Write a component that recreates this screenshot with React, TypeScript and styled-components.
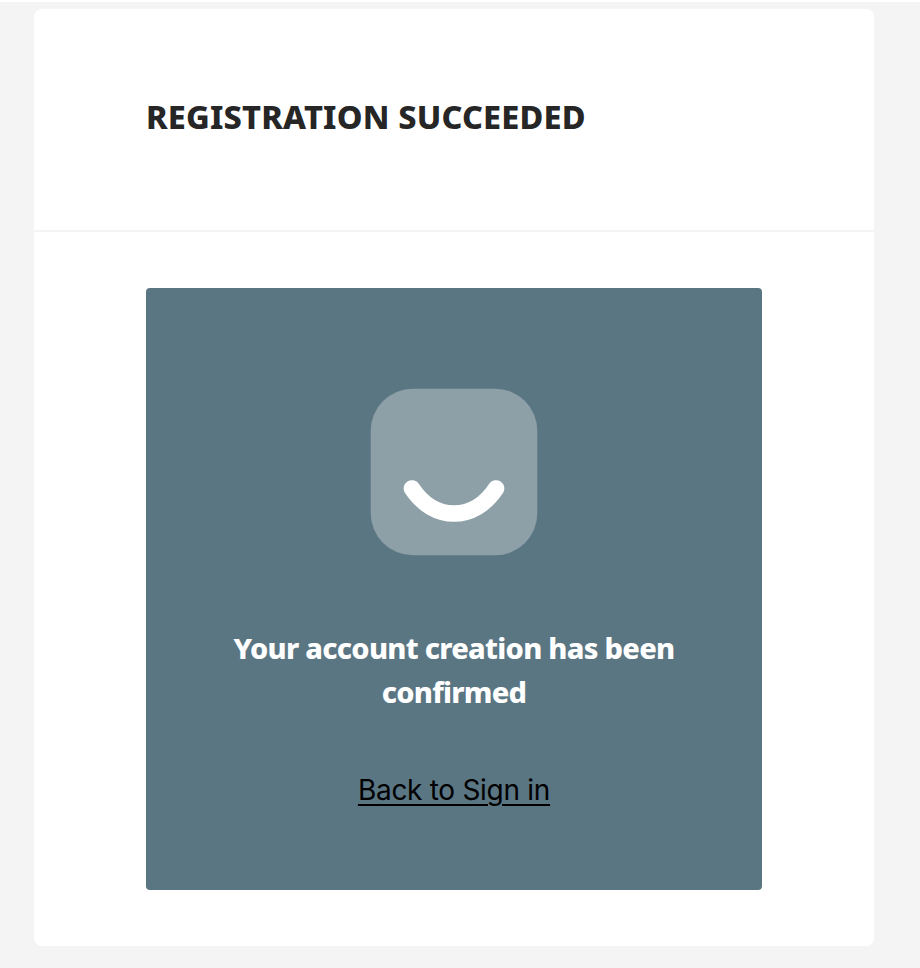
import React from "react";
import styled, { createGlobalStyle } from "styled-components";

const GlobalStyle = createGlobalStyle`
  * { box-sizing: border-box; }
  body { margin: 0; background: #f4f4f4; }
`;

const Page = styled.main`
  height: 968px;
  padding: 7px 46px 0 34px;
  border-top: 2px solid #fff;
  overflow: hidden;
`;

const Card = styled.section`
  width: 840px;
  height: 937px;
  background: #fff;
  border-radius: 8px;
`;

const CardHeader = styled.header`
  height: 223px;
  padding: 84px 112px 0;
  border-bottom: 2px solid #f4f4f4;
`;

const Title = styled.h1`
  margin: 0;
  font-family: "Noto Sans", "Open Sans", sans-serif;
  font-size: 32.5px;
  font-weight: 800;
  line-height: 47px;
  letter-spacing: 0.18px;
  white-space: nowrap;
  color: #262626;
`;

const CardBody = styled.div`
  padding: 56px 112px;
`;

const Panel = styled.div`
  height: 602px;
  padding-top: 100px;
  display: flex;
  flex-direction: column;
  align-items: center;
  background: #5b7683;
  border-radius: 4px;
`;

const Smile = styled.svg`
  display: block;
  width: 168px;
  height: 168px;
`;

const Message = styled.p`
  width: 480px;
  margin: 70px 0 0;
  font-family: "Noto Sans", "Open Sans", sans-serif;
  font-size: 29px;
  font-weight: 800;
  line-height: 44px;
  letter-spacing: -0.72px;
  text-align: center;
  color: #fff;
`;

const SignInLink = styled.a`
  margin-top: 54px;
  font-family: Inter, sans-serif;
  font-size: 28px;
  line-height: 44px;
  letter-spacing: -0.29px;
  white-space: nowrap;
  color: #000;
  text-decoration: underline;
  text-decoration-thickness: 2px;
  text-underline-offset: 4px;
`;

export default function App() {
  return (
    <>
      <GlobalStyle />
      <Page>
        <Card>
          <CardHeader>
            <Title>REGISTRATION SUCCEEDED</Title>
          </CardHeader>
          <CardBody>
            <Panel>
              <Smile viewBox="0 0 168 168" aria-hidden="true">
                <rect x="0.7" y="0.7" width="166.6" height="166.6" rx="42" fill="#8da0a8" />
                <path d="M42 100.5C64 133.8 104 133.8 126 100.5" fill="none" stroke="#fff" strokeWidth="16.7" strokeLinecap="round" />
              </Smile>
              <Message>
                Your account creation has been
                <br />
                confirmed
              </Message>
              <SignInLink href="#">Back to Sign in</SignInLink>
            </Panel>
          </CardBody>
        </Card>
      </Page>
    </>
  );
}
